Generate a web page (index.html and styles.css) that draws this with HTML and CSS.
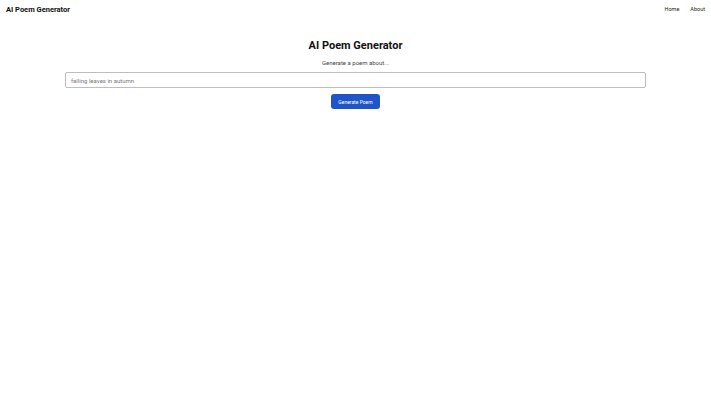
FILE: index.html
```html
<!DOCTYPE html>
<html lang="en">
<head>
  <meta charset="UTF-8" />
  <meta name="viewport" content="width=device-width, initial-scale=1.0"/>
  <title>AI Poem Generator</title>
  <link rel="stylesheet" href="styles.css">
</head>
<body>
  <!-- Header -->
  <div class="header">
    <div class="brand">AI Poem Generator</div>
    <div class="nav">
      <a href="#">Home</a>
      <a href="#">About</a>
    </div>
  </div>

  <!-- Content -->
  <div class="content">
    <h1 class="title">AI Poem Generator</h1>
    <p class="subtitle">Generate a poem about...</p>
    <input class="topic" type="text" placeholder="falling leaves in autumn" />
    <button class="generate">Generate Poem</button>
  </div>
</body>
</html>
```

FILE: styles.css
```css
body {
  margin: 0;
  font-family: Roboto, "Liberation Sans", Arial, sans-serif;
  color: #111;
  background: white;
}

.header {
  display: flex;
  justify-content: space-between;
  align-items: center;
  height: 18px;
  padding: 0 6px;
}

.brand {
  font-size: 7.5px;
  font-weight: bold;
}

.nav {
  display: flex;
  gap: 11px;
}

.nav a {
  text-decoration: none;
  color: #222;
  font-size: 5.5px;
}

.content {
  max-width: 581px;
  margin: 0 auto;
  padding-top: 21px;
  display: flex;
  flex-direction: column;
  align-items: center;
}

.title {
  margin: 0;
  font-size: 11px;
  font-weight: bold;
  line-height: 13px;
}

.subtitle {
  margin: 7px 0 0;
  font-size: 6px;
  color: #444;
  line-height: 8px;
}

.topic {
  box-sizing: border-box;
  width: 100%;
  height: 16px;
  margin-top: 5px;
  padding: 0 5px;
  border: 1px solid #bdbdbd;
  border-radius: 2px;
  font-family: inherit;
  font-size: 6px;
  outline: none;
}

.topic::placeholder {
  color: #777;
}

.generate {
  margin-top: 6px;
  height: 15px;
  padding: 0 7px;
  border: none;
  border-radius: 3px;
  background: #1f55c9;
  color: white;
  font-family: inherit;
  font-size: 5px;
  cursor: pointer;
}
```
